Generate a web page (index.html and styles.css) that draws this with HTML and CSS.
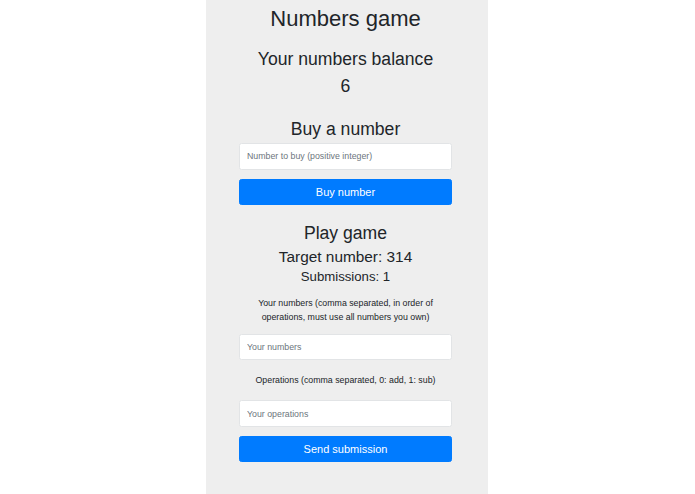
FILE: index.html
```html
<!DOCTYPE html>
<html>
<head>
<meta charset="utf-8">
<title>Numbers game</title>
<link rel="stylesheet" href="styles.css">
</head>
<body>
<div class="page">
  <div class="inner">
    <h1 class="title">Numbers game</h1>
    <h2 class="h2 balance-label">Your numbers balance</h2>
    <div class="h2 balance-value">6</div>
    <h2 class="h2 section-buy">Buy a number</h2>
    <input class="field field-buy" type="text" placeholder="Number to buy (positive integer)">
    <button class="btn btn-buy">Buy number</button>
    <h2 class="h2 section-play">Play game</h2>
    <h3 class="h3">Target number: 314</h3>
    <h4 class="h4">Submissions: 1</h4>
    <p class="hint hint-numbers">Your numbers (comma separated, in order of operations, must use all numbers you own)</p>
    <input class="field field-numbers" type="text" placeholder="Your numbers">
    <p class="hint hint-ops">Operations (comma separated, 0: add, 1: sub)</p>
    <input class="field field-ops" type="text" placeholder="Your operations">
    <button class="btn btn-send">Send submission</button>
  </div>
</div>
</body>
</html>
```
FILE: styles.css
```css
* { box-sizing: border-box; }
html, body { margin: 0; padding: 0; background: #ffffff; }
body {
  padding-right: 1px;
  font-family: "Liberation Sans", Arial, Helvetica, sans-serif;
  color: #212529;
}
.page {
  width: 282px;
  margin: 0 auto;
  min-height: 100vh;
  background: #eeeeee;
}
.inner {
  padding: 6px 36px 30px 33px;
  display: flex;
  flex-direction: column;
  align-items: stretch;
  text-align: center;
}
.title {
  margin: 0;
  font-size: 22px;
  font-weight: 400;
  line-height: 26.4px;
}
.h2 {
  margin: 0;
  font-size: 17.6px;
  font-weight: 400;
  line-height: 21.1px;
}
.balance-label { margin-top: 16.7px; }
.balance-value { margin-top: 6.2px; }
.section-buy { margin-top: 21.6px; }
.section-play { margin-top: 17.6px; }
.h3 {
  margin: 3.7px 0 0;
  font-size: 15.4px;
  font-weight: 400;
  line-height: 18.5px;
}
.h4 {
  margin: 2.9px 0 0;
  font-size: 13.2px;
  font-weight: 400;
  line-height: 15.8px;
}
.hint {
  margin: 0;
  font-size: 8.8px;
  line-height: 13.2px;
}
.hint-numbers { margin-top: 12.4px; }
.hint-ops { margin-top: 14px; }
.field {
  display: block;
  width: 100%;
  height: 26.7px;
  padding: 0 7px;
  font-family: inherit;
  font-size: 8.8px;
  color: #495057;
  background: #ffffff;
  border: 1px solid #e2e4e6;
  border-radius: 2.5px;
  outline: none;
}
.field::placeholder { color: #6c757d; }
.field-buy { margin-top: 2.9px; }
.field-numbers { margin-top: 9.9px; }
.field-ops { margin-top: 12.8px; }
.btn {
  display: block;
  width: 100%;
  height: 26.7px;
  padding: 0;
  font-family: inherit;
  font-size: 11px;
  color: #ffffff;
  background: #007bff;
  border: 1px solid #007bff;
  border-radius: 2.5px;
  cursor: pointer;
}
.btn-buy { margin-top: 9px; }
.btn-send { margin-top: 8.7px; }
```
